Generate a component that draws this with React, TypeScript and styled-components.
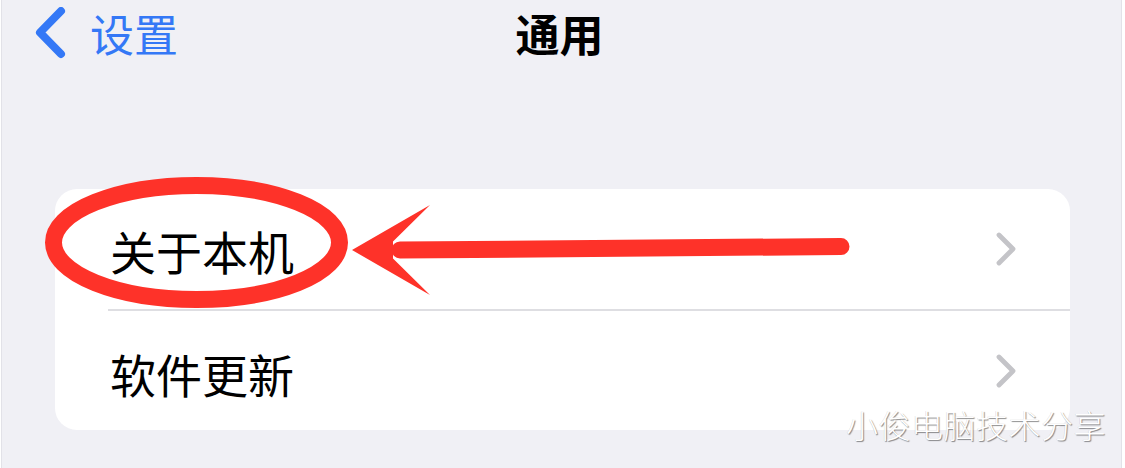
import React from "react";
import styled, { createGlobalStyle } from "styled-components";

const GlobalStyle = createGlobalStyle`
  html, body { margin: 0; padding: 0; background: #ffffff; }
  body { font-family: "Noto Sans CJK SC", "Noto Sans", sans-serif; }
`;

const Screen = styled.div`
  position: relative;
  width: 1119px;
  height: 468px;
  margin-left: 1px;
  background: #f0f0f5;
  border-left: 1px solid #e2e2e8;
  border-right: 1px solid #e2e2e8;
  overflow: hidden;
`;

const NavBar = styled.div`
  display: grid;
  grid-template-columns: 1fr auto 1fr;
  align-items: center;
  height: 66px;
`;

const BackButton = styled.div`
  display: flex;
  align-items: center;
  gap: 24px;
  padding-left: 33px;
  color: #3478f6;
  font-size: 44px;
  line-height: 1;
`;

const BackLabel = styled.span`
  margin-top: -1px;
`;

const Title = styled.div`
  font-size: 44px;
  font-weight: 700;
  color: #000;
  line-height: 1;
  margin-left: -4px;
`;

const Card = styled.div`
  margin: 123px 51px 0 53px;
  background: #ffffff;
  border-radius: 22px;
  overflow: hidden;
`;

const Row = styled.div<{ $h: number }>`
  display: flex;
  align-items: center;
  justify-content: space-between;
  height: ${(p) => p.$h}px;
  padding: 0 54px 0 55px;
  font-size: 46px;
  color: #000;
  line-height: 1;
`;

const RowLabel = styled.span<{ $dy: number }>`
  margin-top: ${(p) => p.$dy}px;
`;

const Divider = styled.div`
  height: 2px;
  margin-left: 53px;
  background: #dedee2;
`;

const Overlay = styled.svg`
  position: absolute;
  left: -2px;
  top: 0;
  pointer-events: none;
`;

const Watermark = styled.div`
  position: absolute;
  left: 844px;
  top: 408px;
  font-size: 32px;
  font-weight: 300;
  line-height: 1;
  color: #ffffff;
  letter-spacing: 0.5px;
  text-shadow: 1px 1px 1px rgba(0, 0, 0, 0.45), -0.5px -0.5px 0 rgba(0, 0, 0, 0.15);
`;

const BackChevron = () => (
  <svg width="31" height="52" viewBox="0 0 31 52">
    <polyline
      points="26,4 5,25.5 26,47"
      fill="none"
      stroke="#3478f6"
      strokeWidth="8"
      strokeLinecap="round"
      strokeLinejoin="round"
    />
  </svg>
);

const Chevron = () => (
  <svg width="20" height="34" viewBox="0 0 20 34">
    <polyline
      points="3,3 17,17 3,31"
      fill="none"
      stroke="#c4c4c8"
      strokeWidth="4.8"
      strokeLinecap="round"
      strokeLinejoin="round"
    />
  </svg>
);

export default function App() {
  return (
    <>
      <GlobalStyle />
      <Screen>
        <NavBar>
          <BackButton>
            <BackChevron />
            <BackLabel>设置</BackLabel>
          </BackButton>
          <Title>通用</Title>
          <div />
        </NavBar>
        <Card>
          <Row $h={120}>
            <RowLabel $dy={1}>关于本机</RowLabel>
            <Chevron />
          </Row>
          <Divider />
          <Row $h={119}>
            <RowLabel $dy={4}>软件更新</RowLabel>
            <Chevron />
          </Row>
        </Card>
        <Overlay width="1125" height="468" viewBox="0 0 1125 468">
          <ellipse cx="196.5" cy="242.5" rx="143" ry="57" fill="none" stroke="#fe3229" strokeWidth="17" />
          <line x1="400" y1="250" x2="841" y2="246.5" stroke="#fe3229" strokeWidth="17" strokeLinecap="round" />
          <polygon points="352,250 430,205 393,241.5 393,258.5 430,295" fill="#fe3229" />
        </Overlay>
        <Watermark>小俊电脑技术分享</Watermark>
      </Screen>
    </>
  );
}
